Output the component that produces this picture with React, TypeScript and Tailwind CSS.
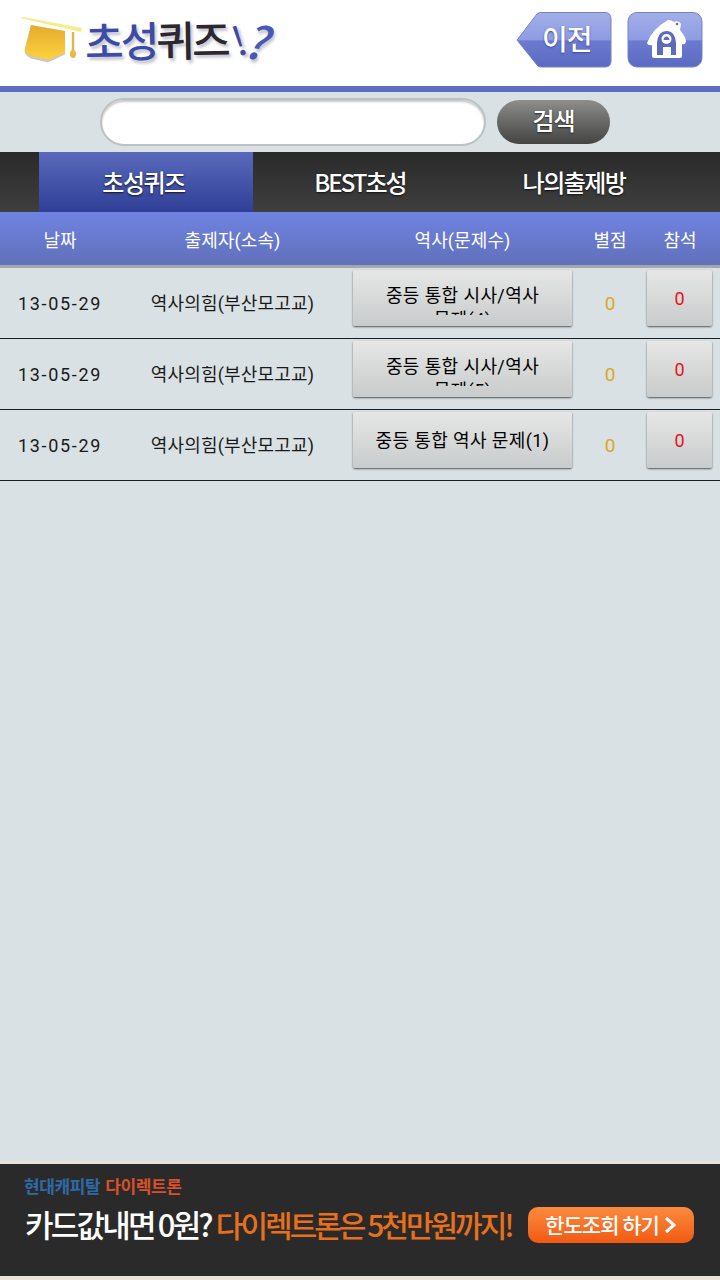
const FONT = 'font-["Roboto","Noto_Sans_CJK_KR",sans-serif]';

const rows = [
  { date: "13-05-29", author: "역사의힘(부산모고교)", title: "중등 통합 시사/역사 문제(4)" },
  { date: "13-05-29", author: "역사의힘(부산모고교)", title: "중등 통합 시사/역사 문제(5)" },
  { date: "13-05-29", author: "역사의힘(부산모고교)", title: "중등 통합 역사 문제(1)" },
];

function CapIcon() {
  return (
    <svg width="64" height="50" viewBox="0 0 64 50" className="shrink-0">
      <defs>
        <linearGradient id="capBody" x1="0" y1="0" x2="0" y2="1">
          <stop offset="0" stopColor="#e3ab2e" />
          <stop offset="1" stopColor="#ffd23f" />
        </linearGradient>
        <filter id="capShade" x="-10%" y="-10%" width="120%" height="130%">
          <feGaussianBlur stdDeviation="0.6" />
        </filter>
      </defs>
      <path d="M12 9 L46 15 L46 37 L29 45 L12 41 Q4 37 6 32 Z" fill="#c9c9c9" filter="url(#capShade)" transform="translate(0 1.500)" />
      <path d="M12 9 L46 15 L46 37 L29 44 L12 40 Q4 36 6 32 Z" fill="url(#capBody)" />
      <path d="M1 2 L4 1 L63 12 L62 16 Z" fill="#f5ec8c" />
      <path d="M54 16 L54 35" stroke="#d9bb55" strokeWidth="2.500" />
      <ellipse cx="54" cy="38" rx="3" ry="4" fill="#e5bb3a" />
    </svg>
  );
}

function BackIcon() {
  return (
    <svg width="96" height="58" viewBox="0 0 96 58">
      <defs>
        <linearGradient id="backFill" x1="0" y1="0" x2="0" y2="1">
          <stop offset="0" stopColor="#a3aee8" />
          <stop offset="0.5" stopColor="#8f9ce2" />
          <stop offset="0.52" stopColor="#6c7bd0" />
          <stop offset="1" stopColor="#5b6ac1" />
        </linearGradient>
      </defs>
      <path d="M1 29 L21 3 Q22 1.500 25 1.500 L89 1.500 Q95 1.500 95 8 L95 50 Q95 56 89 56 L25 56 Q22 56 21 54 Z" fill="url(#backFill)" stroke="#7482cb" />
    </svg>
  );
}

function HomeIcon() {
  return (
    <svg width="76" height="58" viewBox="0 0 76 58">
      <defs>
        <linearGradient id="homeFill" x1="0" y1="0" x2="0" y2="1">
          <stop offset="0" stopColor="#a3aee8" />
          <stop offset="0.5" stopColor="#8f9ce2" />
          <stop offset="0.52" stopColor="#6c7bd0" />
          <stop offset="1" stopColor="#5b6ac1" />
        </linearGradient>
      </defs>
      <rect x="1" y="1.500" width="74" height="54.500" rx="9" fill="url(#homeFill)" stroke="#7482cb" />
      {/* roof and walls */}
      <path d="M41 9 Q45 9 47 11 Q52 9 54 13 L53 19 Q59 26 59 31 Q58 34 55 33 L55 45 Q55 47 53 47 L27 47 Q25 47 25 45 L25 34 Q21 35 20 32 Q25 18 41 9 Z" fill="#fff" />
      {/* door frame */}
      <path d="M30 44 L30 32 Q31 20 40 20 Q48 20 49 32 L49 44 L44 44 L44 36 L36 36 L36 44 Z" fill="#5c6ac0" />
      {/* round window */}
      <circle cx="39.500" cy="28" r="5" fill="#fff" />
      <path d="M36.500 29 Q37 25.500 39.500 25.500 Q42 25.500 42.500 29 Z" fill="#5c6ac0" />
      <circle cx="50" cy="13" r="1.300" fill="#5c6ac0" />
    </svg>
  );
}

function Row({ date, author, title }: { date: string; author: string; title: string }) {
  const single = title.length < 16;
  return (
    <div className="grid grid-cols-[120px_225px_235px_60px_80px] h-[71px] border-b border-[#1c1f20] items-start text-[18px] text-[#1a1a1a]">
      <div className="text-center pt-[24px] leading-[24px] tracking-[1.700px]">{date}</div>
      <div className="text-center pt-[24px] leading-[24px] tracking-[0.200px]">{author}</div>
      <div className="pl-[8px] pt-[2px]">
        <div className="w-[219px] h-[56px] rounded-[2px] bg-gradient-to-b from-[#e6e6e6] to-[#c9cccc] shadow-[0_1px_2px_#4f5355] px-[20px]">
          <div className={`h-[45px] overflow-hidden text-center leading-[24px] text-black tracking-[0.400px] [word-break:keep-all] ${single ? "pt-[17px]" : "pt-[14px]"}`}>
            {title}
          </div>
        </div>
      </div>
      <div className="text-center pt-[24px] leading-[24px] text-[#dba91f] text-[19px]">0</div>
      <div className="pl-[7px] pt-[2px]">
        <div className="w-[65px] h-[56px] rounded-[2px] bg-gradient-to-b from-[#e6e6e6] to-[#c9cccc] shadow-[0_1px_2px_#4f5355] text-center pt-[17px] leading-[24px] text-[#e8101c]">
          0
        </div>
      </div>
    </div>
  );
}

export default function App() {
  return (
    <div className={`w-[720px] h-[1280px] flex flex-col bg-[#d9e1e4] overflow-hidden ${FONT}`}>
      <header className="h-[92px] shrink-0 bg-white border-b-[6px] border-[#5d6dbf] flex items-start justify-between pl-[19px] pr-[17px]">
        <div className="flex items-center pt-[14px]">
          <CapIcon />
          <span className="ml-[2px] -mt-[3px] flex items-center text-[42px] leading-[56px] font-medium tracking-[-3px] text-[#3c4ba6] [text-shadow:2px_3px_3px_#c3c3cc] font-['Noto_Sans_CJK_KR',sans-serif] whitespace-nowrap">
            <span className="-rotate-1">
              초성<span className="text-[#2c2730]">퀴즈</span>
            </span>
            <span className="ml-[4px] -rotate-[18deg] font-normal text-[#3c4ba6] text-[40px]">!</span>
            <span className="ml-[4px] rotate-[10deg] text-[#4858b8] text-[46px] italic">?</span>
          </span>
        </div>
        <nav className="flex items-center gap-[15px] pt-[11px]">
          <div className="relative w-[96px] h-[58px]">
            <BackIcon />
            <span className="absolute left-[26px] top-[9px] text-[28px] leading-[36px] font-medium text-white tracking-[-1px] [text-shadow:0_1px_2px_#3b4793] font-['Noto_Sans_CJK_KR',sans-serif]">
              이전
            </span>
          </div>
          <HomeIcon />
        </nav>
      </header>

      <section className="h-[60px] shrink-0 flex items-start pl-[100px] pt-[6px] gap-[11px]">
        <div className="w-[386px] h-[48px] rounded-[24px] bg-white border-2 border-[#bcc1c2] shadow-[inset_0_2px_2px_#c9c9c9]" />
        <div className="w-[113px] h-[44px] mt-[2px] pb-[5px] rounded-[22px] bg-gradient-to-b from-[#8e8e8c] to-[#444443] flex items-center justify-center text-white text-[24px] font-medium tracking-[-1px] [text-shadow:0_1px_2px_#222] font-['Noto_Sans_CJK_KR',sans-serif]">
          검색
        </div>
      </section>

      <nav className="h-[60px] shrink-0 flex bg-gradient-to-b from-[#2a2a2a] to-[#3f3f3f] text-white text-[24px] font-medium tracking-[-1.500px] [text-shadow:0_1px_2px_#111] font-['Noto_Sans_CJK_KR',sans-serif]">
        <div className="ml-[39px] w-[214px] pr-[5px] bg-gradient-to-b from-[#5a69bb] to-[#2f3f97] flex items-center justify-center">초성퀴즈</div>
        <div className="w-[214px] flex items-center justify-center tracking-[-2px]">BEST초성</div>
        <div className="w-[214px] flex items-center justify-center">나의출제방</div>
      </nav>

      <div className="h-[56px] shrink-0 grid grid-cols-[120px_225px_235px_60px_80px] items-center pt-[3px] bg-gradient-to-b from-[#7083e2] to-[#6070ba] border-b-[3px] border-[#a3a8ad] text-[18px] text-white text-center">
        <div>날짜</div>
        <div className="tracking-[0.100px]">출제자(소속)</div>
        <div className="tracking-[0.100px]">역사(문제수)</div>
        <div>별점</div>
        <div>참석</div>
      </div>

      <main className="flex-1">
        {rows.map((r, i) => (
          <Row key={i} {...r} />
        ))}
      </main>

      <aside className="h-[119px] shrink-0 bg-[#2a2a2a] border-t-[3px] border-b-[4px] border-[#e9e4d8] relative font-['Noto_Sans_CJK_KR',sans-serif] font-bold">
        <div className="pl-[24px] pt-[9px] text-[17px] leading-[26px] tracking-[-0.400px]">
          <span className="text-[#2f6aa8]">현대캐피탈</span>
          <span className="text-[#d9512c] ml-[5px]">다이렉트론</span>
        </div>
        <div className="pl-[25px] mt-[1px] flex items-center font-medium whitespace-nowrap">
          <span className="text-[31px] leading-[48px] tracking-[-2.800px] text-white">카드값내면 0원?</span>
          <span className="ml-[5px] text-[30px] leading-[48px] tracking-[-3px] text-[#e8701c]">다이렉트론은 5천만원까지!</span>
        </div>
        <div className="absolute left-[528px] top-[43px] w-[166px] h-[36px] rounded-[10px] bg-gradient-to-b from-[#fb8a3c] to-[#f2590f] flex items-center justify-center gap-[4px] text-white text-[21px] tracking-[-1px] font-medium">
          한도조회 하기
          <svg width="14" height="18" viewBox="0 0 14 18">
            <path d="M3 2 L11 9 L3 16" fill="none" stroke="#fff" strokeWidth="3" />
          </svg>
        </div>
      </aside>
    </div>
  );
}
